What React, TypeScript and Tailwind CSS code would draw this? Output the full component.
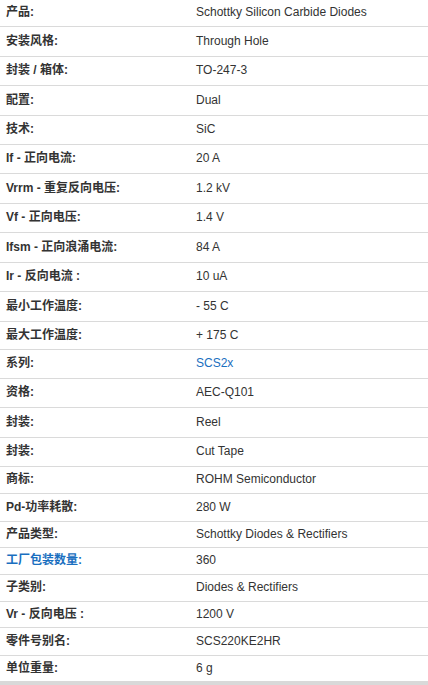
import React from "react";

type Row = { label: string; value: string; h: number; labelBlue?: boolean; valueBlue?: boolean };

const rows: Row[] = [
  { label: "产品:", value: "Schottky Silicon Carbide Diodes", h: 27 },
  { label: "安装风格:", value: "Through Hole", h: 30 },
  { label: "封装 / 箱体:", value: "TO-247-3", h: 29 },
  { label: "配置:", value: "Dual", h: 30 },
  { label: "技术:", value: "SiC", h: 29 },
  { label: "If - 正向电流:", value: "20 A", h: 29 },
  { label: "Vrrm - 重复反向电压:", value: "1.2 kV", h: 30 },
  { label: "Vf - 正向电压:", value: "1.4 V", h: 29 },
  { label: "Ifsm - 正向浪涌电流:", value: "84 A", h: 30 },
  { label: "Ir - 反向电流 :", value: "10 uA", h: 29 },
  { label: "最小工作温度:", value: "- 55 C", h: 30 },
  { label: "最大工作温度:", value: "+ 175 C", h: 28 },
  { label: "系列:", value: "SCS2x", h: 29, valueBlue: true },
  { label: "资格:", value: "AEC-Q101", h: 29 },
  { label: "封装:", value: "Reel", h: 30 },
  { label: "封装:", value: "Cut Tape", h: 29 },
  { label: "商标:", value: "ROHM Semiconductor", h: 27 },
  { label: "Pd-功率耗散:", value: "280 W", h: 28 },
  { label: "产品类型:", value: "Schottky Diodes & Rectifiers", h: 26 },
  { label: "工厂包装数量:", value: "360", h: 27, labelBlue: true },
  { label: "子类别:", value: "Diodes & Rectifiers", h: 27 },
  { label: "Vr - 反向电压 :", value: "1200 V", h: 26 },
  { label: "零件号别名:", value: "SCS220KE2HR", h: 28 },
  { label: "单位重量:", value: "6 g", h: 25 },
];

export default function App() {
  return (
    <div
      className="w-[428px] h-[685px] bg-white overflow-hidden text-[12px] text-[#333333]"
      style={{ fontFamily: '"Liberation Sans", Arial, "Noto Sans CJK SC", sans-serif' }}
    >
      {rows.map((r, i) => (
        <div
          key={i}
          className={`flex items-center pb-[2px] ${i < rows.length - 1 ? "border-b border-[#dadada]" : ""}`}
          style={{ height: r.h }}
        >
          <div className={`w-[196px] pl-[6px] font-bold whitespace-nowrap ${r.labelBlue ? "text-[#1a6fc0]" : ""}`}>
            {r.label}
          </div>
          <div className={`whitespace-nowrap ${r.valueBlue ? "text-[#1a6fc0]" : ""}`}>{r.value}</div>
        </div>
      ))}
      <div className="h-[4px] bg-[#d9d9d9]" />
    </div>
  );
}
